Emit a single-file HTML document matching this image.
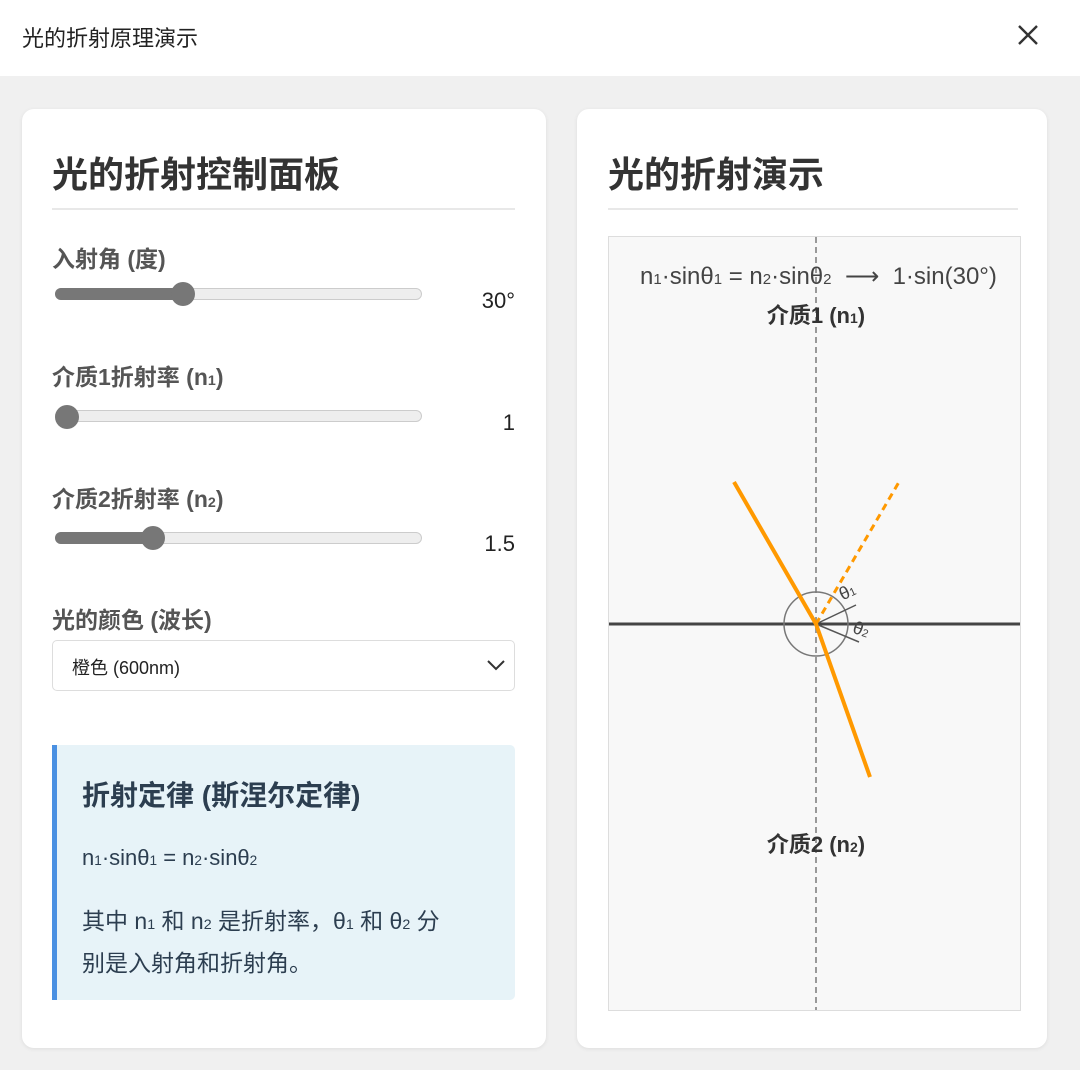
<!DOCTYPE html>
<html><head><meta charset="utf-8"><style>
*{margin:0;padding:0;box-sizing:border-box}
body{width:1080px;height:1070px;background:#f0f0f0;font-family:"Liberation Sans","Noto Sans CJK SC",sans-serif;position:relative;overflow:hidden;color:#333}
.a{position:absolute;white-space:nowrap}
.s{font-size:0.62em}
.top{left:0;top:0;width:1080px;height:76px;background:#fff}
.card{background:#fff;border-radius:12px;box-shadow:0 1px 4px rgba(0,0,0,.08)}
h2{font-size:36px;font-weight:bold;color:#333}
.lab{font-size:23px;font-weight:bold;color:#555}
.track{height:12px;border-radius:6px;background:#eee;border:1px solid #ccc}
.fill{height:12px;border-radius:6px;background:#777}
.thumb{width:24px;height:24px;border-radius:50%;background:#777}
.val{font-size:22px;color:#222;text-align:right;width:80px}
</style></head><body>
<div class="a top"></div>
<div class="a" style="left:22px;top:21px;font-size:22px;color:#222">光的折射原理演示</div>
<svg class="a" style="left:1016px;top:23px" width="24" height="24"><path d="M3 3L21 21M21 3L3 21" stroke="#333" stroke-width="2.4"/></svg>

<div class="a card" style="left:22px;top:109px;width:524px;height:939px"></div>
<h2 class="a" style="left:52px;top:146px">光的折射控制面板</h2>
<div class="a" style="left:52px;top:208px;width:463px;height:2px;background:#e8e8e8"></div>

<div class="a lab" style="left:52px;top:240px">入射角 (度)</div>
<div class="a track" style="left:55px;top:288px;width:367px"></div>
<div class="a fill" style="left:55px;top:288px;width:130px"></div>
<div class="a thumb" style="left:171px;top:282px"></div>
<div class="a val" style="left:435px;top:288px">30°</div>

<div class="a lab" style="left:52px;top:358px">介质1折射率 (n<span class="s">1</span>)</div>
<div class="a track" style="left:55px;top:410px;width:367px"></div>
<div class="a thumb" style="left:55px;top:405px"></div>
<div class="a val" style="left:435px;top:410px">1</div>

<div class="a lab" style="left:52px;top:480px">介质2折射率 (n<span class="s">2</span>)</div>
<div class="a track" style="left:55px;top:532px;width:367px"></div>
<div class="a fill" style="left:55px;top:532px;width:98px"></div>
<div class="a thumb" style="left:141px;top:526px"></div>
<div class="a val" style="left:435px;top:531px">1.5</div>

<div class="a lab" style="left:52px;top:601px">光的颜色 (波长)</div>
<div class="a" style="left:52px;top:640px;width:463px;height:51px;border:1px solid #ddd;border-radius:5px;background:#fff"></div>
<div class="a" style="left:72px;top:654px;font-size:18px;color:#222">橙色 (600nm)</div>
<svg class="a" style="left:486px;top:658px" width="20" height="14"><path d="M2 3L10 11L18 3" stroke="#333" stroke-width="2" fill="none"/></svg>

<div class="a" style="left:52px;top:745px;width:463px;height:255px;background:#e7f3f8;border-left:5px solid #4a90e2;border-radius:0 5px 5px 0"></div>
<div class="a" style="left:82px;top:774px;font-size:28px;font-weight:bold;color:#2c3e50">折射定律 (斯涅尔定律)</div>
<div class="a" style="left:82px;top:845px;font-size:22px;color:#2c3e50">n<span class="s">1</span>·sinθ<span class="s">1</span> = n<span class="s">2</span>·sinθ<span class="s">2</span></div>
<div class="a" style="left:82px;top:902px;width:380px;white-space:normal;font-size:23px;line-height:38px;color:#2c3e50">其中 n<span class="s">1</span> 和 n<span class="s">2</span> 是折射率，θ<span class="s">1</span> 和 θ<span class="s">2</span> 分别是入射角和折射角。</div>

<div class="a card" style="left:577px;top:109px;width:470px;height:939px"></div>
<h2 class="a" style="left:608px;top:146px">光的折射演示</h2>
<div class="a" style="left:608px;top:208px;width:410px;height:2px;background:#e8e8e8"></div>

<div class="a" style="left:608px;top:236px;width:413px;height:775px;background:#f8f8f8;border:1px solid #ddd;overflow:hidden">
<svg width="413" height="775" style="position:absolute;left:0;top:0" font-family="Liberation Sans,Noto Sans CJK SC,sans-serif">
<line x1="207" y1="0" x2="207" y2="775" stroke="#999" stroke-width="2" stroke-dasharray="6,4"/>
<line x1="0" y1="387" x2="413" y2="387" stroke="#444" stroke-width="3"/>
<circle cx="207" cy="387" r="32" fill="none" stroke="#777" stroke-width="1.5"/>
<line x1="207" y1="387" x2="247" y2="368" stroke="#555" stroke-width="1.5"/>
<line x1="207" y1="387" x2="250" y2="405" stroke="#555" stroke-width="1.5"/>
<line x1="125" y1="245" x2="207" y2="387" stroke="#f90" stroke-width="4"/>
<line x1="207" y1="387" x2="290" y2="245" stroke="#f90" stroke-width="3" stroke-dasharray="7,5"/>
<line x1="207" y1="387" x2="261" y2="540" stroke="#f90" stroke-width="4"/>
<text x="230" y="360" font-size="18" fill="#444" transform="rotate(-25 240 354)">θ<tspan font-size="11">1</tspan></text>
<text x="244" y="399" font-size="18" fill="#444" transform="rotate(20 254 393)">θ<tspan font-size="11">2</tspan></text>
<text x="31" y="47" font-size="24" fill="#444" xml:space="preserve">n<tspan font-size="15">1</tspan>·sinθ<tspan font-size="15">1</tspan> = n<tspan font-size="15">2</tspan>·sinθ<tspan font-size="15">2</tspan>  <tspan font-family="DejaVu Sans">⟶</tspan>  1·sin(30°)</text>
<text x="207" y="86" font-size="22" font-weight="bold" fill="#333" text-anchor="middle">介质1 (n<tspan font-size="14">1</tspan>)</text>
<text x="207" y="615" font-size="22" font-weight="bold" fill="#333" text-anchor="middle">介质2 (n<tspan font-size="14">2</tspan>)</text>
</svg></div>
</body></html>
